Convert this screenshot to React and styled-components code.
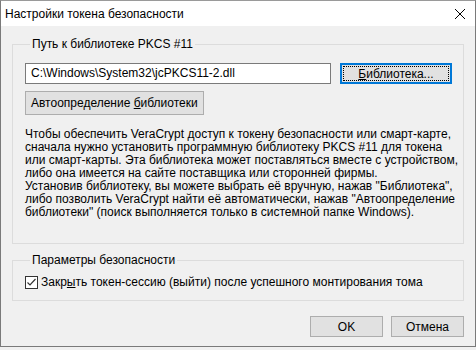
import styled, { createGlobalStyle } from "styled-components";

const Global = createGlobalStyle`
  html, body {
    margin: 0;
    padding: 0;
    background: #f0f0f0;
  }
  body {
    font-family: "Liberation Sans", Arial, sans-serif;
    font-size: 12px;
    color: #000;
  }
`;

const Window = styled.div`
  width: 476px;
  height: 347px;
  box-sizing: border-box;
  border: 1px solid #7a7a7a;
  border-top-color: #9a9a9a;
  background: #f0f0f0;
  display: flex;
  flex-direction: column;
`;

const TitleBar = styled.div`
  height: 25px;
  background: #fff;
  display: flex;
  align-items: center;
  justify-content: space-between;
  padding: 0 9px 0 4px;
  flex-shrink: 0;
`;

const Title = styled.span`
  font-size: 12px;
  line-height: 14px;
`;

const Body = styled.div`
  padding: 11px 11px 0 11px;
  display: flex;
  flex-direction: column;
`;

const Group = styled.fieldset`
  margin: ${(p) => (p.$top ? `${p.$top}px` : "0")} 0 0 0;
  padding: ${(p) => p.$pad};
  border: 1px solid #dcdcdc;
  min-width: 0;
`;

const Legend = styled.legend`
  margin-left: 5px;
  padding: 0 2px;
  line-height: 14px;
  font-size: 12px;
`;

const PathRow = styled.div`
  display: flex;
  align-items: center;
  gap: 9px;
`;

const PathInput = styled.div`
  width: 306px;
  height: 21px;
  box-sizing: border-box;
  border: 1px solid #7a7a7a;
  background: #fff;
  padding: 0 5px;
  line-height: 19px;
  white-space: nowrap;
`;

const Button = styled.button`
  font-family: inherit;
  font-size: 12px;
  color: #000;
  width: ${(p) => (p.$w ? `${p.$w}px` : "auto")};
  height: ${(p) => p.$h || 21}px;
  box-sizing: border-box;
  background: #e1e1e1;
  border: ${(p) => (p.$focused ? "2px solid #0078d7" : "1px solid #adadad")};
  outline: ${(p) => (p.$focused ? "1px dotted #000" : "none")};
  outline-offset: -4px;
  padding: 0;
  line-height: 14px;
  white-space: nowrap;
  flex-shrink: 0;
`;

const AutoButton = styled(Button)`
  align-self: flex-start;
  display: block;
  margin-top: 7px;
  padding: 0 5px;
`;

const Info = styled.div`
  margin-top: 13px;
  line-height: 13px;
  white-space: nowrap;
`;

const Line = styled.span`
  display: block;
`;

const CheckRow = styled.label`
  display: flex;
  align-items: center;
  gap: 3px;
  line-height: 14px;
`;

const CheckBox = styled.span`
  width: 13px;
  height: 13px;
  box-sizing: border-box;
  border: 1px solid #333;
  background: #fff;
  display: flex;
  align-items: center;
  justify-content: center;
  flex-shrink: 0;
`;

const Footer = styled.div`
  display: flex;
  justify-content: flex-end;
  gap: 8px;
  margin-top: 15px;
`;

const lines = [
  "Чтобы обеспечить VeraCrypt доступ к токену безопасности или смарт-карте,",
  "сначала нужно установить программную библиотеку PKCS #11 для токена",
  "или смарт-карты. Эта библиотека может поставляться вместе с устройством,",
  "либо она имеется на сайте поставщика или сторонней фирмы.",
  "Установив библиотеку, вы можете выбрать её вручную, нажав \"Библиотека\",",
  "либо позволить VeraCrypt найти её автоматически, нажав \"Автоопределение",
  "библиотеки\" (поиск выполняется только в системной папке Windows).",
];

export default function App() {
  return (
    <>
      <Global />
      <Window>
        <TitleBar>
          <Title>Настройки токена безопасности</Title>
          <svg width="12" height="12" viewBox="0 0 12 12">
            <path d="M1 1 L11 11 M11 1 L1 11" stroke="#000" strokeWidth="1" fill="none" />
          </svg>
        </TitleBar>
        <Body>
          <Group $pad="12px 11px 24px 12px">
            <Legend>Путь к библиотеке PKCS #11</Legend>
            <PathRow>
              <PathInput>C:\Windows\System32\jcPKCS11-2.dll</PathInput>
              <Button $w={112} $focused>
                <u>Б</u>иблиотека...
              </Button>
            </PathRow>
            <AutoButton $h={24}>
              Автоопределение <u>б</u>иблиотеки
            </AutoButton>
            <Info>
              {lines.map((l, i) => (
                <Line key={i}>{l}</Line>
              ))}
            </Info>
          </Group>
          <Group $top={9} $pad="8px 11px 11px 12px">
            <Legend>Параметры безопасности</Legend>
            <CheckRow>
              <CheckBox>
                <svg width="11" height="11" viewBox="0 0 11 11">
                  <polyline points="1.5,5.5 4,8 9.5,2" stroke="#333" strokeWidth="1.2" fill="none" />
                </svg>
              </CheckBox>
              <span>
                Закр<u>ы</u>ть токен-сессию (выйти) после успешного монтирования тома
              </span>
            </CheckRow>
          </Group>
          <Footer>
            <Button $w={73}>OK</Button>
            <Button $w={73}>Отмена</Button>
          </Footer>
        </Body>
      </Window>
    </>
  );
}
